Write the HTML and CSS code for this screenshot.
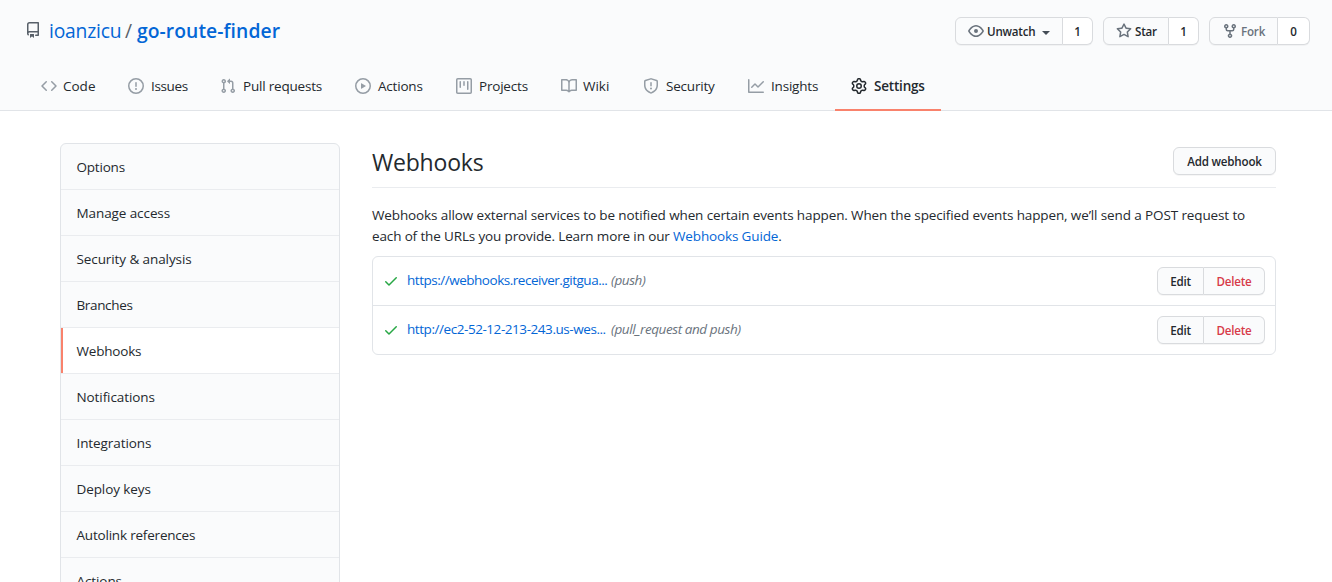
FILE: index.html
```html
<!DOCTYPE html>
<html lang="en">
<head>
<meta charset="utf-8">
<title>Webhooks</title>
<link rel="stylesheet" href="styles.css">
</head>
<body>
<header class="repo-header">
  <div class="repo-top">
    <div class="repo-name">
      <svg class="icon" viewBox="0 0 16 16"><path fill-rule="evenodd" d="M2 2.5A2.5 2.5 0 014.5 0h8.75a.75.75 0 01.75.75v12.5a.75.75 0 01-.75.75h-2.5a.75.75 0 110-1.5h1.75v-2h-8a1 1 0 00-.714 1.7.75.75 0 01-1.072 1.05A2.495 2.495 0 012 11.5v-9zm10.5-1V9h-8c-.356 0-.694.074-1 .208V2.5a1 1 0 011-1h8zM5 12.25v3.25a.25.25 0 00.4.2l1.45-1.087a.25.25 0 01.3 0L8.6 15.7a.25.25 0 00.4-.2v-3.25a.25.25 0 00-.25-.25h-3.5a.25.25 0 00-.25.25z"/></svg>
      <a class="owner">ioanzicu</a><span class="slash">/</span><a class="repo">go-route-finder</a>
    </div>
    <div class="repo-actions">
      <div class="group watch"><span class="btn"><svg class="icon" viewBox="0 0 16 16"><path fill-rule="evenodd" d="M1.679 7.932c.412-.621 1.242-1.75 2.366-2.717C5.175 4.242 6.527 3.5 8 3.5c1.473 0 2.824.742 3.955 1.715 1.124.967 1.954 2.096 2.366 2.717a.119.119 0 010 .136c-.412.621-1.242 1.75-2.366 2.717C10.825 11.758 9.473 12.5 8 12.5c-1.473 0-2.824-.742-3.955-1.715C2.92 9.818 2.09 8.69 1.679 8.068a.119.119 0 010-.136zM8 2c-1.981 0-3.67.992-4.933 2.078C1.797 5.169.88 6.423.43 7.1a1.619 1.619 0 000 1.798c.45.678 1.367 1.932 2.637 3.024C4.329 13.008 6.019 14 8 14c1.981 0 3.67-.992 4.933-2.078 1.27-1.091 2.187-2.345 2.637-3.023a1.619 1.619 0 000-1.798c-.45-.678-1.367-1.932-2.637-3.023C11.671 2.992 9.981 2 8 2zm0 8a2 2 0 100-4 2 2 0 000 4z"/></svg><span>Unwatch</span><i class="caret"></i></span><span class="btn count">1</span></div>
      <div class="group star"><span class="btn"><svg class="icon" viewBox="0 0 16 16"><path fill-rule="evenodd" d="M8 .25a.75.75 0 01.673.418l1.882 3.815 4.21.612a.75.75 0 01.416 1.279l-3.046 2.97.719 4.192a.75.75 0 01-1.088.791L8 12.347l-3.766 1.98a.75.75 0 01-1.088-.79l.72-4.194L.818 6.374a.75.75 0 01.416-1.28l4.21-.611L7.327.668A.75.75 0 018 .25zm0 2.445L6.615 5.5a.75.75 0 01-.564.41l-3.097.45 2.24 2.184a.75.75 0 01.216.664l-.528 3.084 2.769-1.456a.75.75 0 01.698 0l2.77 1.456-.53-3.084a.75.75 0 01.216-.664l2.24-2.183-3.096-.45a.75.75 0 01-.564-.41L8 2.694v.001z"/></svg><span>Star</span></span><span class="btn count">1</span></div>
      <div class="group fork"><span class="btn disabled"><svg class="icon" viewBox="0 0 16 16"><path fill-rule="evenodd" d="M5 3.25a.75.75 0 11-1.5 0 .75.75 0 011.5 0zm0 2.122a2.25 2.25 0 10-1.5 0v.878A2.25 2.25 0 005.75 8.5h1.5v2.128a2.251 2.251 0 101.5 0V8.5h1.5a2.25 2.25 0 002.25-2.25v-.878a2.25 2.25 0 10-1.5 0v.878a.75.75 0 01-.75.75h-4.5A.75.75 0 015 6.25v-.878zm3.75 7.378a.75.75 0 11-1.5 0 .75.75 0 011.5 0zm3-8.75a.75.75 0 100-1.5.75.75 0 000 1.5z"/></svg><span>Fork</span></span><span class="btn count">0</span></div>
    </div>
  </div>
  <nav class="tabs">
    <a class="tab t-code"><svg class="icon" viewBox="0 0 16 16"><path d="M4.72 3.22a.75.75 0 011.06 1.06L2.06 8l3.72 3.72a.75.75 0 11-1.06 1.06L.47 8.53a.75.75 0 010-1.06l4.25-4.25zm6.56 0a.75.75 0 10-1.06 1.06L13.94 8l-3.72 3.72a.75.75 0 101.06 1.06l4.25-4.25a.75.75 0 000-1.06l-4.25-4.25z"/></svg><span>Code</span></a>
    <a class="tab t-issues"><svg class="icon" viewBox="0 0 16 16"><path fill-rule="evenodd" d="M8 1.5a6.5 6.5 0 100 13 6.5 6.5 0 000-13zM0 8a8 8 0 1116 0A8 8 0 010 8zm9 3a1 1 0 11-2 0 1 1 0 012 0zm-.25-6.25a.75.75 0 00-1.5 0v3.5a.75.75 0 001.5 0v-3.5z"/></svg><span>Issues</span></a>
    <a class="tab t-pulls"><svg class="icon" viewBox="0 0 16 16"><path fill-rule="evenodd" d="M7.177 3.073L9.573.677A.25.25 0 0110 .854v4.792a.25.25 0 01-.427.177L7.177 3.427a.25.25 0 010-.354zM3.75 2.5a.75.75 0 100 1.5.75.75 0 000-1.5zm-2.25.75a2.25 2.25 0 113 2.122v5.256a2.251 2.251 0 11-1.5 0V5.372A2.25 2.25 0 011.5 3.25zM11 2.5h-1V4h1a1 1 0 011 1v5.628a2.251 2.251 0 101.5 0V5A2.5 2.5 0 0011 2.5zm1 10.25a.75.75 0 111.5 0 .75.75 0 01-1.5 0zM3.75 12a.75.75 0 100 1.5.75.75 0 000-1.5z"/></svg><span>Pull requests</span></a>
    <a class="tab t-actions"><svg class="icon" viewBox="0 0 16 16"><path fill-rule="evenodd" d="M1.5 8a6.5 6.5 0 1113 0 6.5 6.5 0 01-13 0zM8 0a8 8 0 100 16A8 8 0 008 0zM6.379 5.227A.25.25 0 006 5.442v5.117a.25.25 0 00.379.214l4.264-2.559a.25.25 0 000-.428L6.379 5.227z"/></svg><span>Actions</span></a>
    <a class="tab t-projects"><svg class="icon" viewBox="0 0 16 16"><path fill-rule="evenodd" d="M1.75 0A1.75 1.75 0 000 1.75v12.5C0 15.216.784 16 1.75 16h12.5A1.75 1.75 0 0016 14.25V1.75A1.75 1.75 0 0014.25 0H1.75zM1.5 1.75a.25.25 0 01.25-.25h12.5a.25.25 0 01.25.25v12.5a.25.25 0 01-.25.25H1.75a.25.25 0 01-.25-.25V1.75zM11.75 3a.75.75 0 00-.75.75v7.5a.75.75 0 001.5 0v-7.5a.75.75 0 00-.75-.75zm-8.25.75a.75.75 0 011.5 0v5.5a.75.75 0 01-1.5 0v-5.5zM8 3a.75.75 0 00-.75.75v3.5a.75.75 0 001.5 0v-3.5A.75.75 0 008 3z"/></svg><span>Projects</span></a>
    <a class="tab t-wiki"><svg class="icon" viewBox="0 0 16 16"><path fill-rule="evenodd" d="M0 1.75A.75.75 0 01.75 1h4.253c1.227 0 2.317.59 3 1.501A3.744 3.744 0 0111.006 1h4.245a.75.75 0 01.75.75v10.5a.75.75 0 01-.75.75h-4.507a2.25 2.25 0 00-1.591.659l-.622.621a.75.75 0 01-1.06 0l-.622-.621A2.25 2.25 0 005.258 13H.75a.75.75 0 01-.75-.75V1.75zm8.755 3a2.25 2.25 0 012.25-2.25H14.5v9h-3.757c-.71 0-1.4.201-1.992.572l.004-7.322zm-1.504 7.324l.004-5.073-.002-2.253A2.25 2.25 0 005.003 2.5H1.5v9h3.757a3.75 3.75 0 011.994.574z"/></svg><span>Wiki</span></a>
    <a class="tab t-security"><svg class="icon" viewBox="0 0 16 16"><path fill-rule="evenodd" d="M7.467.133a1.75 1.75 0 011.066 0l5.25 1.68A1.75 1.75 0 0115 3.48V7c0 1.566-.32 3.182-1.303 4.682-.983 1.498-2.585 2.813-5.032 3.855a1.7 1.7 0 01-1.33 0c-2.447-1.042-4.049-2.357-5.032-3.855C1.32 10.182 1 8.566 1 7V3.48a1.75 1.75 0 011.217-1.667l5.25-1.68zm.61 1.429a.25.25 0 00-.153 0l-5.25 1.68a.25.25 0 00-.174.238V7c0 1.358.275 2.666 1.057 3.86.784 1.194 2.121 2.34 4.366 3.297a.2.2 0 00.154 0c2.245-.956 3.582-2.104 4.366-3.298C13.225 9.666 13.5 8.36 13.5 7V3.48a.25.25 0 00-.174-.237l-5.25-1.68zM9 10.5a1 1 0 11-2 0 1 1 0 012 0zm-.25-5.75a.75.75 0 10-1.5 0v3a.75.75 0 001.5 0v-3z"/></svg><span>Security</span></a>
    <a class="tab t-insights"><svg class="icon" viewBox="0 0 16 16"><path fill-rule="evenodd" d="M1.5 1.75a.75.75 0 00-1.5 0v12.5c0 .414.336.75.75.75h14.5a.75.75 0 000-1.5H1.5V1.75zm14.28 2.53a.75.75 0 00-1.06-1.06L10 7.94 7.53 5.47a.75.75 0 00-1.06 0L3.22 8.72a.75.75 0 001.06 1.06L7 7.06l2.47 2.47a.75.75 0 001.06 0l5.25-5.25z"/></svg><span>Insights</span></a>
    <a class="tab t-settings selected"><svg class="icon" viewBox="0 0 16 16"><path fill-rule="evenodd" d="M7.429 1.525a6.593 6.593 0 011.142 0c.036.003.108.036.137.146l.289 1.105c.147.56.55.967.997 1.189.174.086.341.183.501.29.417.278.97.423 1.53.27l1.102-.303c.11-.03.175.016.195.046.219.31.41.641.573.989.014.031.022.11-.059.19l-.815.806c-.411.406-.562.957-.53 1.456a4.588 4.588 0 010 .582c-.032.499.119 1.05.53 1.456l.815.806c.08.08.073.159.059.19a6.494 6.494 0 01-.573.99c-.02.029-.086.074-.195.045l-1.103-.303c-.559-.153-1.112-.008-1.529.27-.16.107-.327.204-.5.29-.449.222-.851.628-.998 1.189l-.289 1.105c-.029.11-.101.143-.137.146a6.613 6.613 0 01-1.142 0c-.036-.003-.108-.037-.137-.146l-.289-1.105c-.147-.56-.55-.967-.997-1.189a4.502 4.502 0 01-.501-.29c-.417-.278-.97-.423-1.53-.27l-1.102.303c-.11.03-.175-.016-.195-.046a6.492 6.492 0 01-.573-.989c-.014-.031-.022-.11.059-.19l.815-.806c.411-.406.562-.957.53-1.456a4.587 4.587 0 010-.582c.032-.499-.119-1.05-.53-1.456l-.815-.806c-.08-.08-.073-.159-.059-.19a6.44 6.44 0 01.573-.99c.02-.029.086-.075.195-.045l1.103.303c.559.153 1.112.008 1.529-.27.16-.107.327-.204.5-.29.449-.222.851-.628.998-1.189l.289-1.105c.029-.11.101-.143.137-.146zM8 0c-.236 0-.47.01-.701.03-.743.065-1.29.615-1.458 1.261l-.29 1.106c-.017.066-.078.158-.211.224a5.994 5.994 0 00-.668.386c-.123.082-.233.09-.3.071L3.27 2.776c-.644-.177-1.392.02-1.82.63a7.977 7.977 0 00-.704 1.217c-.315.675-.111 1.422.363 1.891l.815.806c.05.048.098.147.088.294a6.084 6.084 0 000 .772c.01.147-.038.246-.088.294l-.815.806c-.474.469-.678 1.216-.363 1.891.2.428.436.835.704 1.218.428.609 1.176.806 1.82.63l1.103-.303c.066-.019.176-.011.299.071.213.143.436.272.668.386.133.066.194.158.212.224l.289 1.106c.169.646.715 1.196 1.458 1.26a8.094 8.094 0 001.402 0c.743-.064 1.29-.614 1.458-1.26l.29-1.106c.017-.066.078-.158.211-.224a5.98 5.98 0 00.668-.386c.123-.082.233-.09.3-.071l1.102.302c.644.177 1.392-.02 1.82-.63.268-.382.505-.789.704-1.217.315-.675.111-1.422-.364-1.891l-.814-.806c-.05-.048-.098-.147-.088-.294a6.1 6.1 0 000-.772c-.01-.147.039-.246.088-.294l.814-.806c.475-.469.679-1.216.364-1.891a7.992 7.992 0 00-.704-1.218c-.428-.609-1.176-.806-1.82-.63l-1.103.303c-.066.019-.176.011-.299-.071a5.991 5.991 0 00-.668-.386c-.133-.066-.194-.158-.212-.224L10.16 1.29C9.99.645 9.444.095 8.701.031A8.094 8.094 0 008 0zm1.5 8a1.5 1.5 0 11-3 0 1.5 1.5 0 013 0zM11 8a3 3 0 11-6 0 3 3 0 016 0z"/></svg><span>Settings</span></a>
  </nav>
</header>
<main class="layout">
  <nav class="menu">
    <a class="item">Options</a>
    <a class="item loose">Manage access</a>
    <a class="item loose">Security &amp; analysis</a>
    <a class="item tight">Branches</a>
    <a class="item current">Webhooks</a>
    <a class="item loose">Notifications</a>
    <a class="item loose">Integrations</a>
    <a class="item loose">Deploy keys</a>
    <a class="item">Autolink references</a>
    <a class="item loose">Actions</a>
  </nav>
  <section class="content">
    <div class="subhead"><h2>Webhooks</h2><span class="btn solo">Add webhook</span></div>
    <p class="intro"><span class="line first">Webhooks allow external services to be notified when certain events happen. When the specified events happen, we’ll send a POST request to</span> <span class="line second">each of the URLs you provide. Learn more in our <a>Webhooks Guide</a>.</span></p>
    <ul class="hooks">
      <li class="hook">
        <svg class="icon check" viewBox="0 0 16 16"><path fill-rule="evenodd" d="M13.78 4.22a.75.75 0 010 1.06l-7.25 7.25a.75.75 0 01-1.06 0L2.22 9.28a.75.75 0 011.06-1.06L6 10.94l6.72-6.72a.75.75 0 011.06 0z"/></svg>
        <a class="url u1">https://webhooks.receiver.gitgua...</a><em>(push)</em>
        <div class="group"><span class="btn edit">Edit</span><span class="btn delete">Delete</span></div>
      </li>
      <li class="hook">
        <svg class="icon check" viewBox="0 0 16 16"><path fill-rule="evenodd" d="M13.78 4.22a.75.75 0 010 1.06l-7.25 7.25a.75.75 0 01-1.06 0L2.22 9.28a.75.75 0 011.06-1.06L6 10.94l6.72-6.72a.75.75 0 011.06 0z"/></svg>
        <a class="url u2">http://ec2-52-12-213-243.us-wes...</a><em>(pull_request and push)</em>
        <div class="group"><span class="btn edit">Edit</span><span class="btn delete">Delete</span></div>
      </li>
    </ul>
  </section>
</main>
</body>
</html>
```
FILE: styles.css
```css
* { box-sizing: border-box; }
body {
  margin: 0;
  height: 582px;
  overflow: hidden;
  background: #fff;
  color: #24292e;
  font: 13.5px/21px "Open Sans", "Noto Sans", sans-serif;
  letter-spacing: -0.2px;
}
.icon { width: 16px; height: 16px; flex: none; fill: currentColor; display: block; }
.repo-header {
  height: 111px;
  background: #fafbfc;
  border-bottom: 1px solid #e1e4e8;
  display: flex;
  flex-direction: column;
  justify-content: space-between;
}
.repo-top { display: flex; justify-content: space-between; padding: 16px 22px 0 25px; }
.repo-name { display: flex; align-items: center; height: 30px; font-size: 19.3px; line-height: 30px; color: #586069; }
.repo-name .icon { margin: -2px 8px 0 0; }
.owner { color: #0366d6; width: 73px; letter-spacing: -0.2px; }
.slash { width: 15px; padding-left: 3px; }
.repo { color: #0366d6; font-weight: 600; letter-spacing: 0.07px; }
.repo-actions { display: flex; gap: 10px; padding-top: 1px; }
.group { display: flex; }
.btn {
  display: flex;
  align-items: center;
  justify-content: center;
  height: 28px;
  border: 1px solid #d9dbde;
  background: #fafbfc;
  font-size: 11.6px;
  font-weight: 600;
  line-height: 20px;
  white-space: nowrap;
  box-shadow: 0 1px 0 rgba(27, 31, 35, .04);
}
.btn.count, .btn.solo, .btn.edit, .btn.delete, .btn > span { padding-top: 2px; }
.group .btn:first-child { border-radius: 6px 0 0 6px; }
.group .btn:last-child { border-radius: 0 6px 6px 0; border-left: 0; }
.repo-actions .btn:first-child { justify-content: flex-start; padding-left: 12px; }
.repo-actions .icon { color: #6a737d; margin-right: 3px; }
.watch .btn:first-child { width: 108px; }
.star .btn:first-child { width: 66px; }
.fork .btn:first-child { width: 69px; }
.repo-actions .btn.count { width: 30px; background: #fff; }
.repo-actions .fork .count { width: 32px; }
.btn.disabled { color: #6a737d; }
.caret { margin: 3px 0 0 7px; border: 4px solid transparent; border-top-color: #444d56; border-bottom: 0; }
.tabs { display: flex; height: 48px; padding-left: 25px; margin-bottom: -1px; }
.tab { display: flex; align-items: center; gap: 7px; padding-left: 16px; white-space: nowrap; border-bottom: 2px solid transparent; }
.tab .icon { color: #959da5; }
.t-code { width: 87px; gap: 6px; letter-spacing: 0; }
.t-issues { width: 92px; letter-spacing: -0.35px; }
.t-pulls { width: 135px; }
.t-actions { width: 101px; }
.t-projects { width: 105px; }
.t-wiki { width: 82px; gap: 6px; letter-spacing: 0; }
.t-security { width: 105px; }
.t-insights { width: 103px; }
.t-settings { width: 106px; }
.tab.selected { font-weight: 600; border-bottom-color: #f9826c; }
.tab.selected .icon { color: #24292e; }
.layout { display: flex; gap: 32px; padding: 32px 56px 0 60px; }
.menu { flex: none; width: 280px; border: 1px solid #e1e4e8; border-radius: 6px; overflow: hidden; background: #fafbfc; }
.item { display: flex; align-items: center; height: 46px; padding: 1px 16px 0 15.5px; border-bottom: 1px solid #eaecef; }
.item.loose { letter-spacing: -0.09px; }
.item.tight { letter-spacing: -0.35px; }
.item.current { background: #fff; box-shadow: inset 2px 0 0 #f9826c; }
.content { flex: 1; min-width: 0; }
.subhead { display: flex; align-items: center; justify-content: space-between; height: 45px; padding-bottom: 8px; border-bottom: 1px solid #eaecef; }
h2 { margin: 1px 0 0; font-size: 23px; font-weight: 400; line-height: 36px; letter-spacing: -0.2px; }
.solo { width: 103px; border-radius: 6px; }
.intro { margin: 17px 0 9px; white-space: nowrap; }
.line { display: block; }
.first { letter-spacing: -0.12px; }
.second { letter-spacing: -0.14px; }
.intro a, .url { color: #0366d6; }
.hooks { list-style: none; margin: 0; padding: 0; border: 1px solid #e1e4e8; border-radius: 6px; }
.hook { display: flex; align-items: center; height: 48px; padding: 0 10px; white-space: nowrap; }
.hook + .hook { height: 49px; border-top: 1px solid #e1e4e8; }
.check { color: #28a745; margin-right: 8px; }
.url { width: 204px; padding-bottom: 1px; }
.u1 { letter-spacing: -0.48px; }
.u2 { letter-spacing: -0.44px; }
.hook em { color: #6a737d; letter-spacing: -0.42px; padding-bottom: 1px; }
.hook .group { margin-left: auto; }
.edit { width: 47px; }
.delete { width: 61px; color: #d73a49; }
```
